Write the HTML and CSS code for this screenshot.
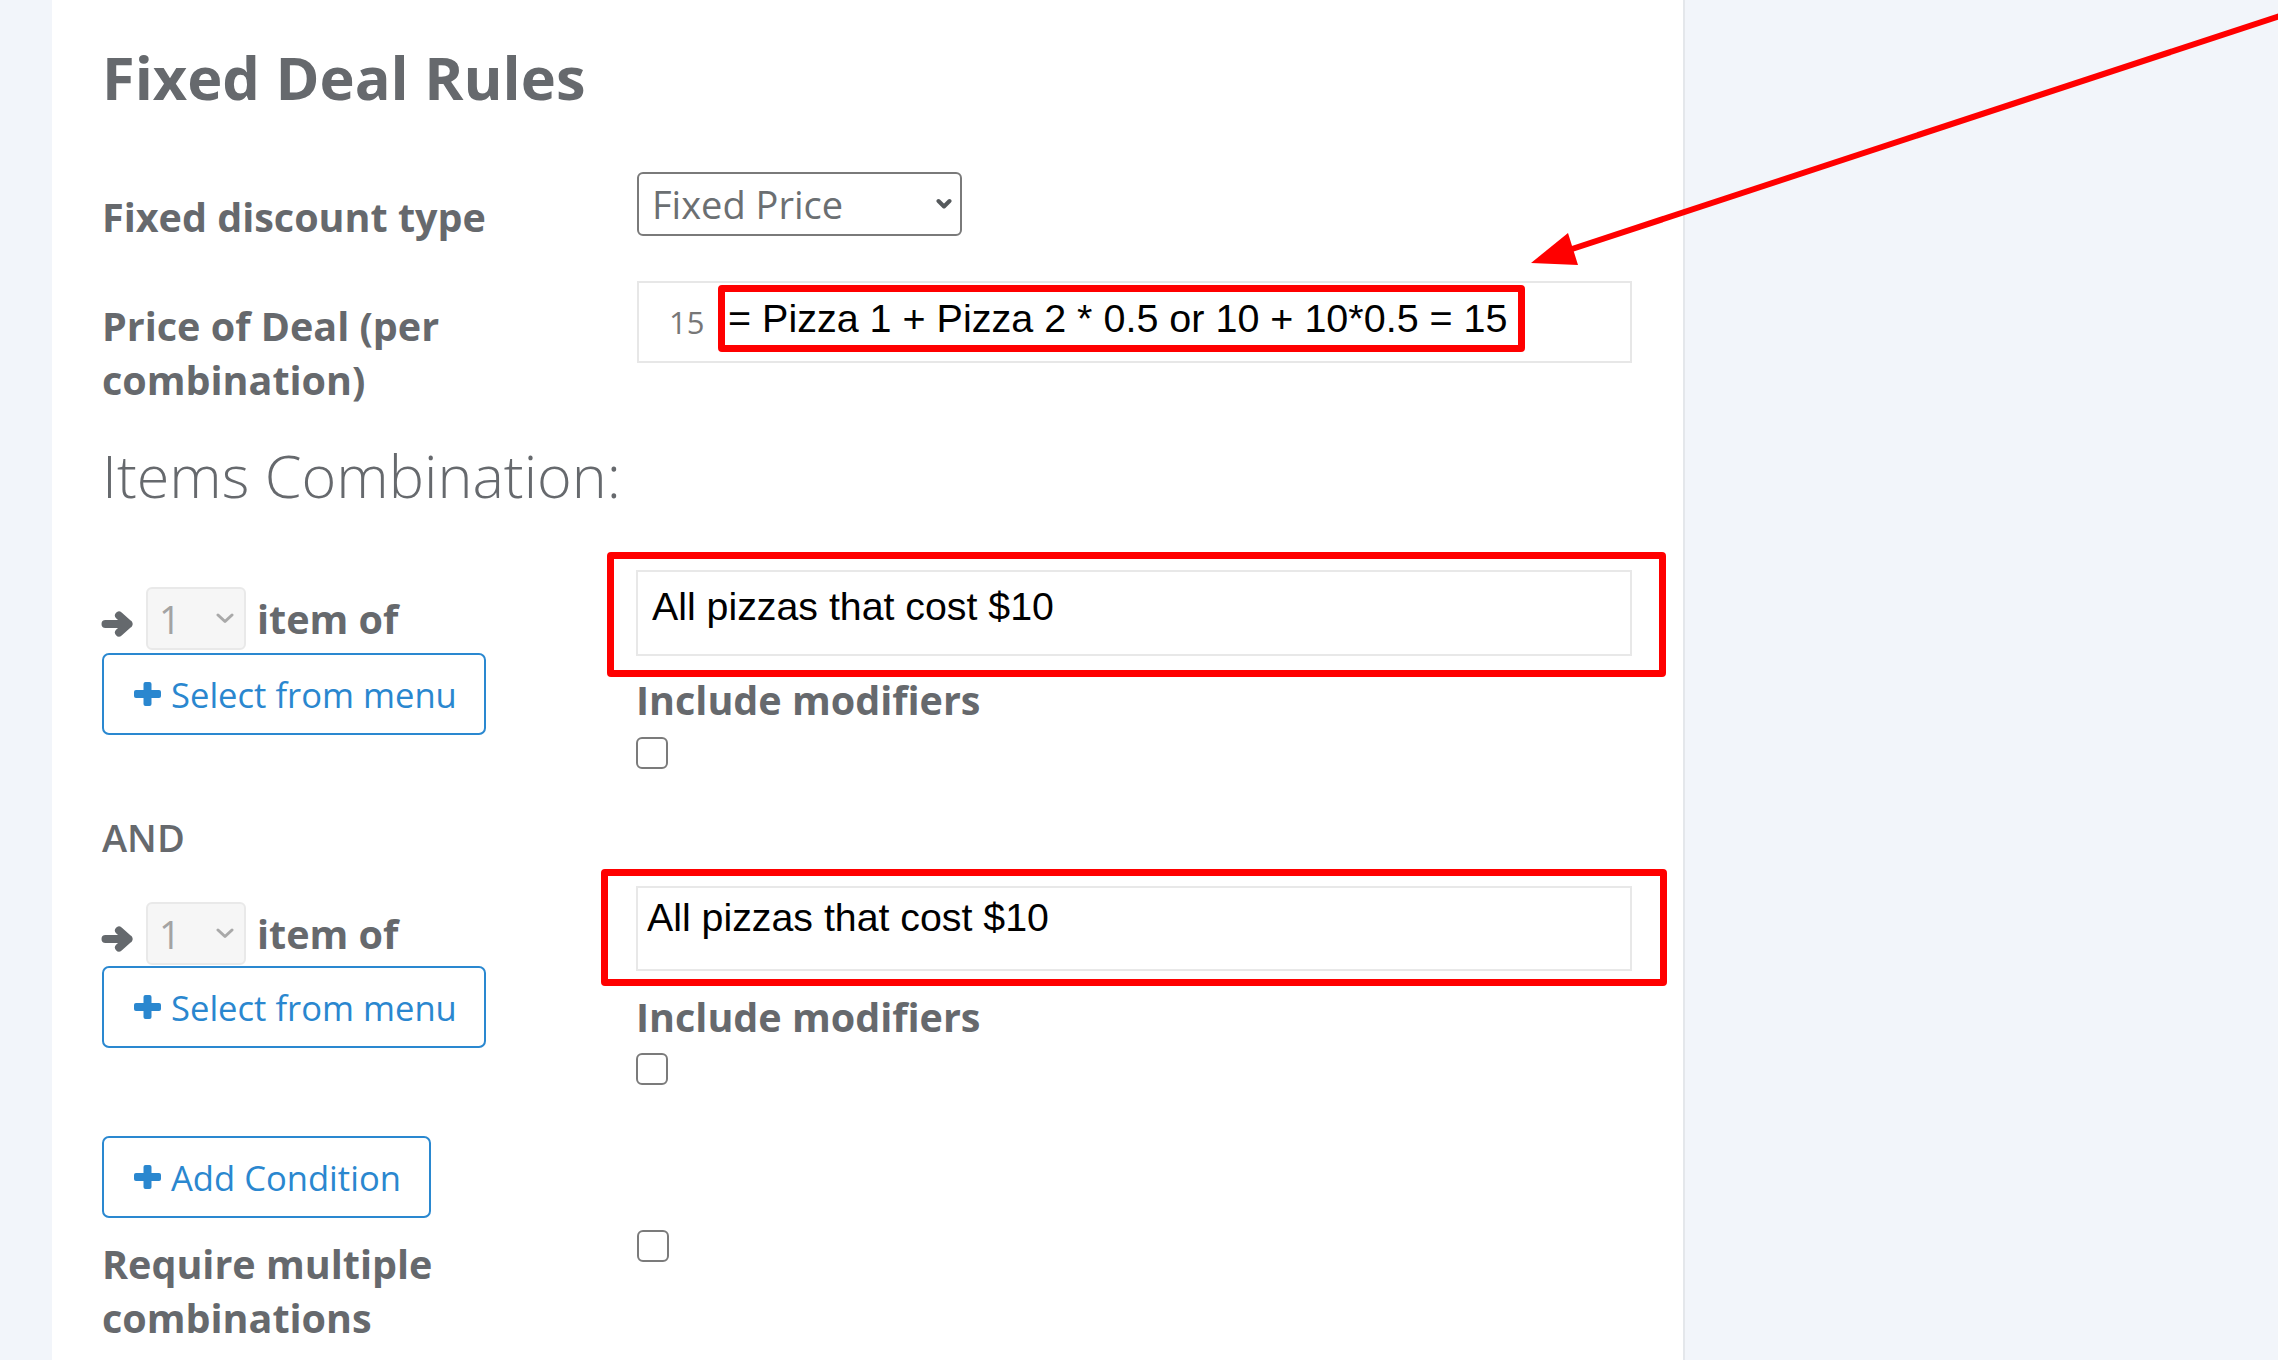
FILE: index.html
```html
<!DOCTYPE html>
<html lang="en">
<head>
  <meta charset="UTF-8" />
  <meta name="viewport" content="width=device-width, initial-scale=1.0"/>
  <title>Fixed Deal Rules</title>
  <link rel="stylesheet" href="styles.css">
</head>
<body>
  <div class="panel">
    <h2 class="title">Fixed Deal Rules</h2>

    <div class="form-row row-type">
      <label class="field-label">Fixed discount type</label>
      <div class="select-box">
        <span>Fixed Price</span>
        <svg class="chevron" width="16" height="12" viewBox="0 0 16 12"><polyline points="2.5,3 8,8.5 13.5,3" /></svg>
      </div>
    </div>

    <div class="form-row row-price">
      <label class="field-label" for="preco">Price of Deal (per combination)</label>
      <div class="price-field">
        <input type="text" id="preco" class="price-input" value="15" />
        <!-- annotation from the screenshot -->
        <div class="formula">= Pizza 1 + Pizza 2 * 0.5 or 10 + 10*0.5 = 15</div>
      </div>
    </div>

    <h3 class="section-title">Items Combination:</h3>

    <div class="cond-row">
      <div class="cond-left">
        <div class="qty-line">
          <svg class="arrow-icon" width="33" height="26" viewBox="0 0 33 26"><path d="M4.5 13h23M18 4.5l9.5 8.5-9.5 8.5" /></svg>
          <div class="qty-select">
            <span>1</span>
            <svg class="chevron light" width="18" height="11" viewBox="0 0 18 11"><polyline points="2,2 9,8.5 16,2" /></svg>
          </div>
          <span class="item-of">item of</span>
        </div>
        <button class="btn-outline btn-menu">
          <svg class="plus" width="27" height="24" viewBox="0 0 27 24"><rect x="9.5" y="0" width="8" height="24" rx="2" /><rect x="0" y="8" width="27" height="8" rx="2" /></svg>
          Select from menu
        </button>
      </div>
      <div class="cond-right">
        <div class="pick-wrap">
          <input type="text" class="pick-input" value="All pizzas that cost $10" />
          <span class="mark mark-a"></span>
        </div>
        <label class="field-label include-label">Include modifiers</label>
        <span class="check"></span>
      </div>
    </div>

    <div class="and-label">AND</div>

    <div class="cond-row second">
      <div class="cond-left">
        <div class="qty-line">
          <svg class="arrow-icon" width="33" height="26" viewBox="0 0 33 26"><path d="M4.5 13h23M18 4.5l9.5 8.5-9.5 8.5" /></svg>
          <div class="qty-select">
            <span>1</span>
            <svg class="chevron light" width="18" height="11" viewBox="0 0 18 11"><polyline points="2,2 9,8.5 16,2" /></svg>
          </div>
          <span class="item-of">item of</span>
        </div>
        <button class="btn-outline btn-menu">
          <svg class="plus" width="27" height="24" viewBox="0 0 27 24"><rect x="9.5" y="0" width="8" height="24" rx="2" /><rect x="0" y="8" width="27" height="8" rx="2" /></svg>
          Select from menu
        </button>
      </div>
      <div class="cond-right">
        <div class="pick-wrap">
          <input type="text" class="pick-input" value="All pizzas that cost $10" />
          <span class="mark mark-b"></span>
        </div>
        <label class="field-label include-label">Include modifiers</label>
        <span class="check"></span>
      </div>
    </div>

    <button class="btn-outline btn-add">
      <svg class="plus" width="27" height="24" viewBox="0 0 27 24"><rect x="9.5" y="0" width="8" height="24" rx="2" /><rect x="0" y="8" width="27" height="8" rx="2" /></svg>
      Add Condition
    </button>

    <div class="form-row row-multi">
      <label class="field-label">Require multiple combinations</label>
      <div><span class="check"></span></div>
    </div>
  </div>

  <!-- red pointer drawn over the page -->
  <svg class="pointer" width="2278" height="1360" viewBox="0 0 2278 1360">
    <line x1="2292" y1="12" x2="1572" y2="249" />
    <polygon points="1531,263 1568,233 1578,265" />
  </svg>
</body>
</html>
```

FILE: styles.css
```css
* {
  box-sizing: border-box;
}

body {
  margin: 0;
  background-color: #f2f5fa;
  font-family: "Open Sans", Arial, sans-serif;
  color: #66696d;
  overflow: hidden;
}

.panel {
  margin-left: 52px;
  width: 1633px;
  min-height: 1360px;
  background: #fff;
  border-right: 2px solid #e4e7eb;
  padding: 40px 0 0 50px;
}

.title {
  margin: 0;
  font-size: 59.5px;
  font-weight: 700;
  line-height: 73px;
}

.form-row {
  display: grid;
  grid-template-columns: 535px 995px;
  align-items: start;
}

.row-type {
  margin-top: 59px;
}

.row-price {
  margin-top: 37px;
}

.field-label {
  display: block;
  max-width: 480px;
  padding-top: 18px;
  font-size: 39.5px;
  font-weight: 700;
  line-height: 54px;
}

.select-box {
  width: 325px;
  height: 64px;
  display: flex;
  align-items: center;
  justify-content: space-between;
  padding: 0 8px 0 13px;
  border: 2px solid #7a7a7a;
  border-radius: 6px;
  font-size: 38px;
  color: #6b6f72;
}

.chevron polyline {
  fill: none;
  stroke: #55595c;
  stroke-width: 4;
  stroke-linecap: round;
  stroke-linejoin: round;
}

.chevron.light polyline {
  stroke: #a9a9a9;
  stroke-width: 3;
}

.price-field {
  position: relative;
  width: 995px;
}

.price-input {
  display: block;
  width: 995px;
  height: 82px;
  margin: 0;
  padding: 0 0 0 30px;
  border: 2px solid #e7e7e7;
  font-family: "Open Sans", Arial, sans-serif;
  font-size: 31px;
  color: #777;
  outline: none;
}

.formula {
  position: absolute;
  left: 81px;
  top: 4px;
  width: 807px;
  height: 67px;
  padding-left: 3px;
  border: 7px solid #ff0000;
  border-radius: 4px;
  background: #fff;
  font-family: "Liberation Sans", Arial, sans-serif;
  font-size: 39.5px;
  line-height: 53px;
  color: #000;
  white-space: nowrap;
}

.section-title {
  margin: 32px 0 0;
  font-size: 59.3px;
  font-weight: 300;
  line-height: 72px;
}

.cond-row {
  display: grid;
  grid-template-columns: 534px 996px;
  align-items: start;
  margin-top: 59px;
}

.cond-left {
  padding-top: 17px;
}

.qty-line {
  display: flex;
  align-items: center;
  height: 63px;
}

.arrow-icon {
  margin: 10px 12px 0 -1px;
}

.arrow-icon path {
  fill: none;
  stroke: #65696d;
  stroke-width: 8;
  stroke-linecap: round;
  stroke-linejoin: round;
}

.qty-select {
  width: 100px;
  height: 63px;
  display: flex;
  align-items: center;
  justify-content: space-between;
  padding: 0 10px 0 11px;
  border: 2px solid #e9e9e9;
  border-radius: 6px;
  background: #f6f6f6;
  font-size: 38px;
  color: #a3a3a3;
}

.item-of {
  margin-left: 11px;
  font-size: 39.5px;
  font-weight: 700;
  line-height: 54px;
}

.btn-outline {
  display: flex;
  align-items: center;
  gap: 10px;
  height: 82px;
  padding: 0 0 0 30px;
  border: 2px solid #2a88d0;
  border-radius: 7px;
  background: #fff;
  font-family: "Open Sans", Arial, sans-serif;
  font-size: 34.6px;
  color: #2a87cf;
  cursor: pointer;
}

.plus rect {
  fill: #2a87cf;
}

.btn-menu {
  width: 384px;
  margin-top: 3px;
}

.btn-add {
  width: 329px;
  margin-top: 51px;
}

.pick-wrap {
  position: relative;
}

.pick-input {
  display: block;
  width: 996px;
  height: 86px;
  margin: 0;
  padding: 0 0 13px 14px;
  border: 2px solid #e8e8e8;
  font-family: "Liberation Sans", Arial, sans-serif;
  font-size: 39.3px;
  color: #000;
  outline: none;
}

.mark {
  position: absolute;
  border: 7px solid #ff0000;
  border-radius: 4px;
  pointer-events: none;
}

.mark-a {
  inset: -18px -34px -21px -29px;
}

.mark-b {
  inset: -17px -35px -15px -35px;
}

.include-label {
  padding-top: 0;
  margin-top: 17px;
}

.check {
  display: block;
  width: 32px;
  height: 32px;
  margin-top: 10px;
  border: 2px solid #7b7b7b;
  border-radius: 6px;
  background: #fff;
}

.and-label {
  margin-top: 41px;
  font-size: 38px;
  font-weight: 600;
  line-height: 54px;
}

.cond-row.second {
  margin-top: 22px;
}

.second .cond-left {
  padding-top: 16px;
}

.second .btn-menu {
  margin-top: 1px;
}

.second .pick-input {
  height: 85px;
  padding: 0 0 22px 9px;
}

.second .include-label {
  margin-top: 19px;
}

.second .check {
  margin-top: 9px;
}

.row-multi {
  margin-top: 0;
}

.row-multi .field-label {
  padding-top: 19px;
}

.row-multi .check {
  margin-top: 12px;
}

/* seta vermelha por cima */
.pointer {
  position: fixed;
  top: 0;
  left: 0;
  pointer-events: none;
}

.pointer line {
  stroke: #ff0000;
  stroke-width: 6;
}

.pointer polygon {
  fill: #ff0000;
}
```
